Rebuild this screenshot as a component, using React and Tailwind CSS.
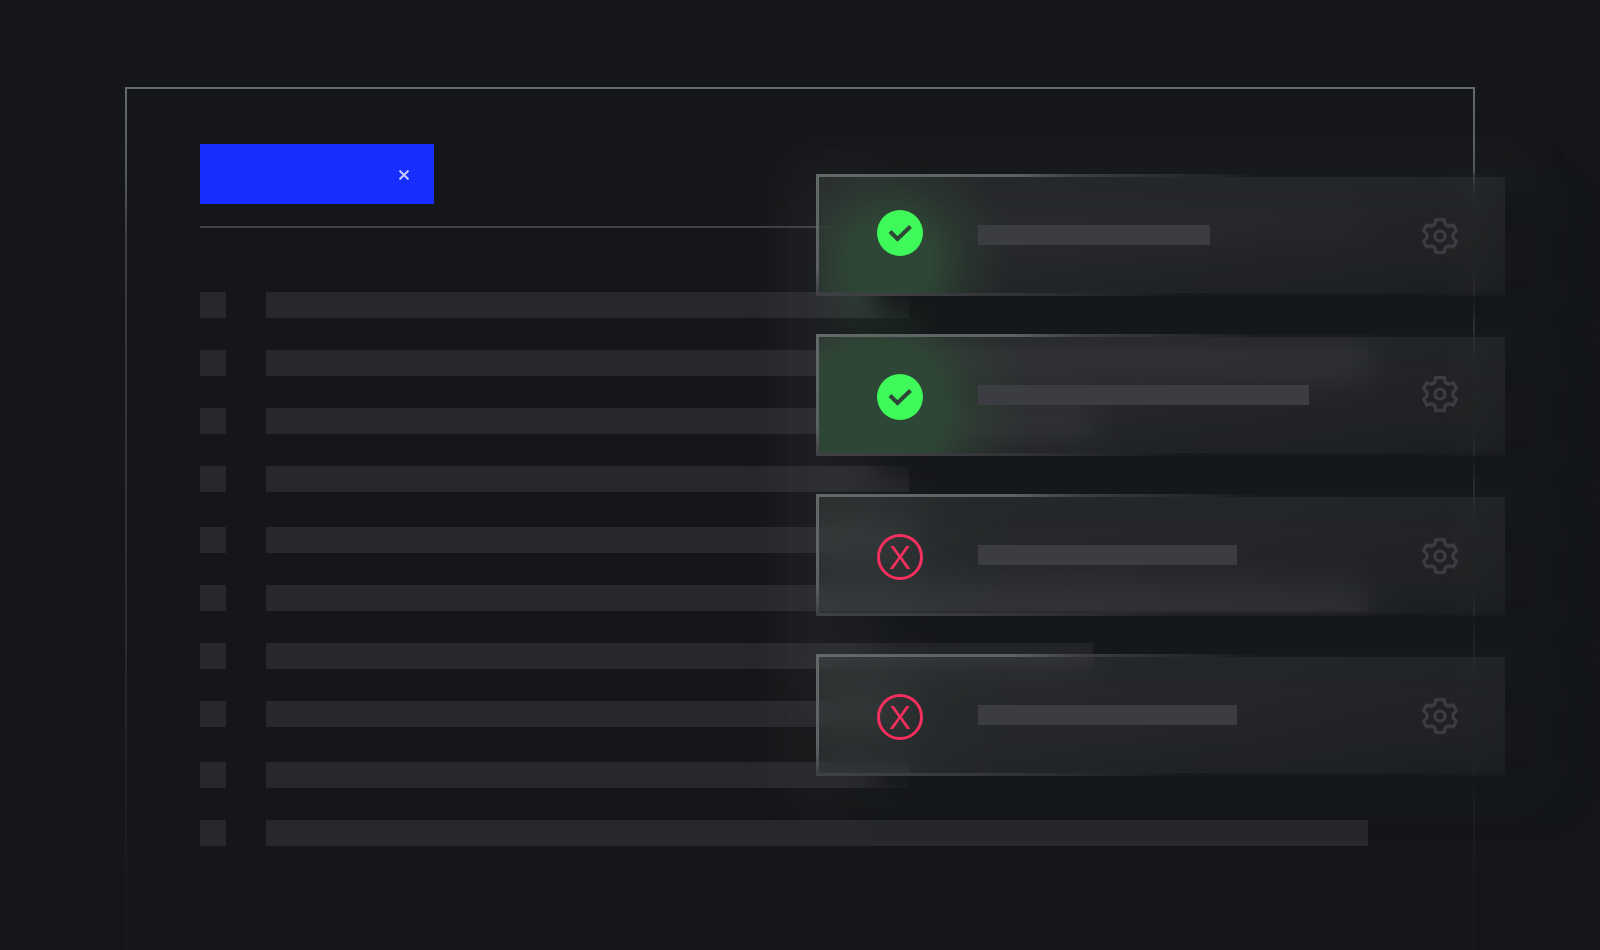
import { useState } from 'react';

// rows come in groups, with a slightly larger gap between the groups
const rowGroups = [
  ['w-7/12', 'w-full', 'w-3/4', 'w-7/12'],
  ['w-7/12', 'w-full', 'w-3/4', 'w-7/12'],
  ['w-7/12', 'w-full'],
];

const dimGlow = 'bg-[radial-gradient(circle_at_20px_40px,#2f3a3455_0px,#2f3a3400_170px)]';

const cards = [
  { id: 1, ok: true, bar: 'w-[232px]', iconPad: 'pt-[33px]', gearPad: 'pt-[41px]', glow: 'bg-[radial-gradient(circle_at_72px_84px,#2e4635_40px,#2e463566_76px,#2e463500_120px)]' },
  { id: 2, ok: true, bar: 'w-[331px]', iconPad: 'pt-[37px]', gearPad: 'pt-[39px]', glow: 'bg-[radial-gradient(circle_at_60px_72px,#2e4635_64px,#2e463566_98px,#2e463500_150px)]' },
  { id: 3, ok: false, bar: 'w-[259px]', iconPad: 'pt-[37px]', gearPad: 'pt-[41px]', glow: dimGlow },
  { id: 4, ok: false, bar: 'w-[259px]', iconPad: 'pt-[37px]', gearPad: 'pt-[41px]', glow: dimGlow },
];

const GearIcon = () => (
  <svg viewBox="0 0 36 36" className="h-9 w-9" fill="none" stroke="currentColor" strokeWidth="3.2">
    <path d="M13.800 1.700h8.400l1.100 4.700 3.200 1.800 4.700-1.300 3.200 5.800-3.300 3.500v3.600l3.300 3.500-3.200 5.800-4.700-1.300-3.200 1.800-1.100 4.700h-8.400l-1.100-4.700-3.200-1.800-4.700 1.300-3.200-5.800 3.300-3.500v-3.600l-3.300-3.500 3.200-5.800 4.700 1.300 3.200-1.800z" />
    <circle cx="18" cy="18" r="5" />
  </svg>
);

const StatusIcon = ({ ok }) => {
  if (ok) {
    return (
      <svg viewBox="0 0 46 46" className="h-[46px] w-[46px]" fill="none">
        <circle cx="23" cy="23" r="23" fill="#3ef959" />
        <path d="M13 21.500l7.500 7.500L33.500 16.500" stroke="#2e4637" strokeWidth="4" />
      </svg>
    );
  }
  return (
    <span className="flex h-[46px] w-[46px] items-center justify-center rounded-full border-3 border-[#f62f5e] font-['Liberation_Sans',sans-serif] text-[33px] leading-none text-[#f62f5e]">
      X
    </span>
  );
};

const ResultCard = ({ card }) => (
  <li className="relative flex h-[122px] items-start border-y-3 border-l-3 bg-linear-165 from-[#ffffff12] via-[#f0f0ff0f] to-[#ffffff05] bg-clip-padding pl-[58px] shadow-[60px_20px_30px_#141619] backdrop-blur-lg [border-image:radial-gradient(72%_190%_at_0_0,#626969_0%,#5c6263_40%,#3f4045_52%,#3f404500_90%)_3]">
    <div className={`absolute inset-0 ${card.glow}`} />
    <div className={`relative ${card.iconPad}`}>
      <StatusIcon ok={card.ok} />
    </div>
    <div className="relative ml-[55px] pt-12">
      <div className={`h-5 bg-[#3c3d42] ${card.bar}`} />
    </div>
    <div className={`relative mr-[47px] ml-auto ${card.gearPad}`}>
      <button type="button" aria-label="Settings" className="block text-[#3c3d42]">
        <GearIcon />
      </button>
    </div>
  </li>
);

const App = () => {
  const [tagOpen, setTagOpen] = useState(true);

  return (
    <main className="relative flex min-h-screen flex-col overflow-hidden bg-[#141619] px-[125px] pt-[87px]">
      <section className="flex-1 border-x-2 border-t-2 pt-[55px] pr-[105px] pl-[73px] [border-image:linear-gradient(#66696b_0%,#55585a_10%,#3b3c40_18%,#2c2d31_60%,#17191b_92%)_2]">
        <div className="h-[60px]">
          {tagOpen && (
            <div className="flex h-full w-[234px] items-center justify-end bg-[#182dff] pt-0.5 pr-[25px]">
              <button type="button" aria-label="Remove" onClick={() => setTagOpen(false)} className="text-[#c5caff]">
                <svg viewBox="0 0 10 10" className="h-2.5 w-2.5" stroke="currentColor" strokeWidth="2">
                  <path d="M0.500 0.500l9 9M9.500 0.500l-9 9" />
                </svg>
              </button>
            </div>
          )}
        </div>
        <hr className="mt-[22px] border-t-2 border-[#3f4044]" />

        <div className="mt-16 flex flex-col gap-[35px]">
          {rowGroups.map((group, g) => (
            <ul key={g} className="flex flex-col gap-8">
              {group.map((width, i) => (
                <li key={i} className="flex gap-10">
                  <input type="checkbox" aria-label={`Row ${g * 4 + i + 1}`} className="h-[26px] w-[26px] shrink-0 appearance-none bg-[#27282c]" />
                  <div className="flex-1">
                    <div className={`h-[26px] bg-[#27282c] ${width}`} />
                  </div>
                </li>
              ))}
            </ul>
          ))}
        </div>
      </section>

      {/* cards floating over the list, with a soft light behind them */}
      <div className="absolute top-[174px] right-[95px] left-[51%]">
        <div className="absolute -inset-x-12 -top-9 -bottom-10 rounded-[60px] bg-[#8a8a720a] blur-[16px]" />
        <div className="absolute top-0 -left-6 h-[540px] w-32 rounded-[60px] bg-[#a0a4a80a] blur-[24px]" />
        <div className="absolute top-20 left-5 h-20 w-24 rounded-full bg-[#3ef95912] blur-[16px]" />
        <ul className="flex flex-col gap-[38px]">
          {cards.map((card) => (
            <ResultCard key={card.id} card={card} />
          ))}
        </ul>
      </div>
    </main>
  );
};

export default App;
